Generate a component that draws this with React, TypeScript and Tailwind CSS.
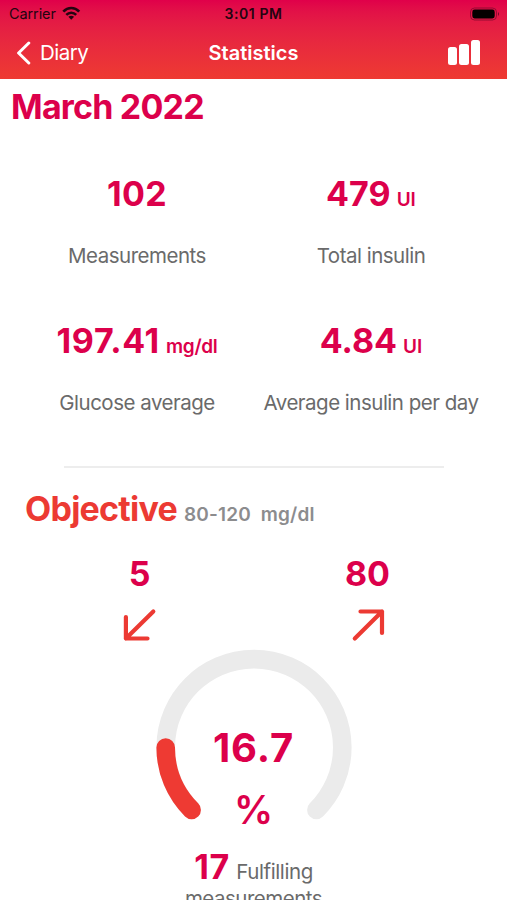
import React from "react";

const ROSE = "text-[#dc004b]";

type StatProps = {
  value: string;
  unit?: string;
  label: string;
  valueClass?: string;
  unitClass?: string;
};

function Stat({ value, unit, label, valueClass = "", unitClass = "" }: StatProps) {
  return (
    <div className="flex flex-col items-center whitespace-nowrap">
      <div className={`flex h-[42px] items-baseline leading-[42px] ${ROSE}`}>
        <span className={`text-[34px] font-bold ${valueClass}`}>{value}</span>
        {unit && <span className={`ml-[6px] text-[19px] font-semibold ${unitClass}`}>{unit}</span>}
      </div>
      <div className="mt-[27px] h-7 text-[20.5px] leading-7 tracking-[-0.5px] text-[#6a6a6a]">{label}</div>
    </div>
  );
}

function StatusBar() {
  return (
    <div className="grid h-[27px] grid-cols-3 items-center text-[#240410]">
      <div className="flex items-center gap-[6px] pl-[9px] text-[14.5px]">
        <span className="tracking-[-0.1px]">Carrier</span>
        <svg width="20" height="15" viewBox="0 0 20 15" fill="none" stroke="currentColor" strokeWidth="2.7">
          <path d="M1.3 5.6 C5.9 0.8 12.6 0.8 17.2 5.6" />
          <path d="M4.3 8.9 C7.1 6 11.4 6 14.2 8.9" strokeWidth="2.5" />
          <path d="M6.4 10.8 Q9.25 8.6 12.1 10.8 L9.25 13.8 Z" fill="currentColor" stroke="none" />
        </svg>
      </div>
      <div className="text-center text-[14px] font-semibold tracking-[0.6px]">3:01 PM</div>
      <div className="flex justify-end pr-[6px]">
        <svg width="32" height="14" viewBox="0 0 32 14">
          <rect x="1.5" y="1" width="26" height="12" rx="4" fill="none" stroke="#6d0829" strokeOpacity=".65" />
          <rect x="3.3" y="2.6" width="22.4" height="8.8" rx="2.3" fill="#050000" />
          <path d="M29 5 Q31 7 29 9 Z" fill="#6d0829" />
        </svg>
      </div>
    </div>
  );
}

export default function App() {
  return (
    <div className="h-[900px] w-full overflow-hidden bg-white font-['Inter','Liberation_Sans',sans-serif]">
      <header className="h-[79px] bg-linear-to-b from-[#e0004a] to-[#ee3a31]">
        <StatusBar />
        <nav className="grid h-[51px] grid-cols-3 items-center text-white">
          <div className="flex items-center gap-[9px] pl-4">
            <svg width="15" height="24" viewBox="0 0 15 24" fill="none" stroke="currentColor" strokeWidth="3" strokeLinecap="round" strokeLinejoin="round">
              <path d="M12.8 2 L2.6 12 L12.8 22" />
            </svg>
            <span className="pt-px text-[20.5px] tracking-[-0.5px]">Diary</span>
          </div>
          <div className="text-center text-[20px] font-semibold tracking-[0px]">Statistics</div>
          <div className="flex h-[25px] items-end justify-end gap-[2px] pr-[27px]">
            <div className="h-[18px] w-[9.5px] rounded-[2.5px] bg-white" />
            <div className="h-[21px] w-[9.5px] rounded-[2.5px] bg-white" />
            <div className="h-[25px] w-[9.5px] rounded-[2.5px] bg-white" />
          </div>
        </nav>
      </header>

      <h1 className={`mt-[7px] pl-[11px] text-[34px] leading-[42px] font-bold tracking-[-0.8px] ${ROSE}`}>March 2022</h1>

      <section className="mt-[45px] grid grid-cols-[234px_234px] gap-y-[50px] pl-5">
        <Stat value="102" label="Measurements" valueClass="tracking-[0.4px]" />
        <Stat value="479" unit="UI" label="Total insulin" />
        <Stat value="197.41" unit="mg/dl" label="Glucose average" valueClass="tracking-[0.7px]" unitClass="tracking-[-0.3px]" />
        <Stat value="4.84" unit="UI" label="Average insulin per day" />
      </section>

      <div className="mx-auto mt-[49px] h-[2px] w-[380px] bg-[#ededed]" />

      <section>
        <h2 className="mt-[20px] flex h-[41px] items-baseline pl-[25px] leading-[42px]">
          <span className="text-[34px] font-bold tracking-[-0.75px] text-[#ec3a33]">Objective</span>
          <span className="ml-[7px] text-[19px] font-semibold tracking-[0.15px] whitespace-pre text-[#8c8c8e]">80-120  mg/dl</span>
        </h2>

        <div className="mt-[24px] flex justify-center gap-[128px]">
          <div className="flex w-[100px] flex-col items-center">
            <span className={`text-[34px] leading-[42px] font-bold ${ROSE}`}>5</span>
            <svg className="mt-3" width="36" height="36" viewBox="0 0 36 36" fill="none" stroke="#ec3a33" strokeWidth="4.2" strokeLinecap="round" strokeLinejoin="round">
              <path d="M31.3 4.5 L3.9 31.5 M3.9 10 V31.5 H25.5" />
            </svg>
          </div>
          <div className="flex w-[100px] flex-col items-center">
            <span className={`text-[34px] leading-[42px] font-bold ${ROSE}`}>80</span>
            <svg className="mt-3" width="36" height="36" viewBox="0 0 36 36" fill="none" stroke="#ec3a33" strokeWidth="4.2" strokeLinecap="round" strokeLinejoin="round">
              <path d="M4.8 31.5 L32 4.5 M10.5 4.5 H32 V26" />
            </svg>
          </div>
        </div>

        <div className="mt-[5px] grid justify-center">
          <svg className="col-start-1 row-start-1" width="200" height="200" viewBox="0 0 200 200" fill="none" strokeWidth="18.6" strokeLinecap="round">
            <path d="M37.6 161.9 A88.3 88.3 0 1 1 162.4 161.9" stroke="#ebebeb" />
            <path d="M37.6 161.9 A88.3 88.3 0 0 1 11.7 99.5" stroke="#ee3a33" />
          </svg>
          <div className={`col-start-1 row-start-1 pt-[69px] text-center text-[40px] leading-[62px] font-bold ${ROSE}`}>
            <div className="tracking-[0.9px]">16.7</div>
            <div className="text-[39px] font-semibold">%</div>
          </div>
        </div>

        <div className="mt-[-2px] text-center text-[20.5px] leading-[42px] tracking-[-0.5px] text-[#6a6a6a]">
          <span className={`text-[34px] font-bold tracking-[0.8px] ${ROSE}`}>17</span>
          <span className="ml-[6px] tracking-[-0.4px]">Fulfilling</span>
          <div className="mt-[-8px] h-[28px] leading-[28px]">measurements</div>
        </div>
      </section>
    </div>
  );
}
